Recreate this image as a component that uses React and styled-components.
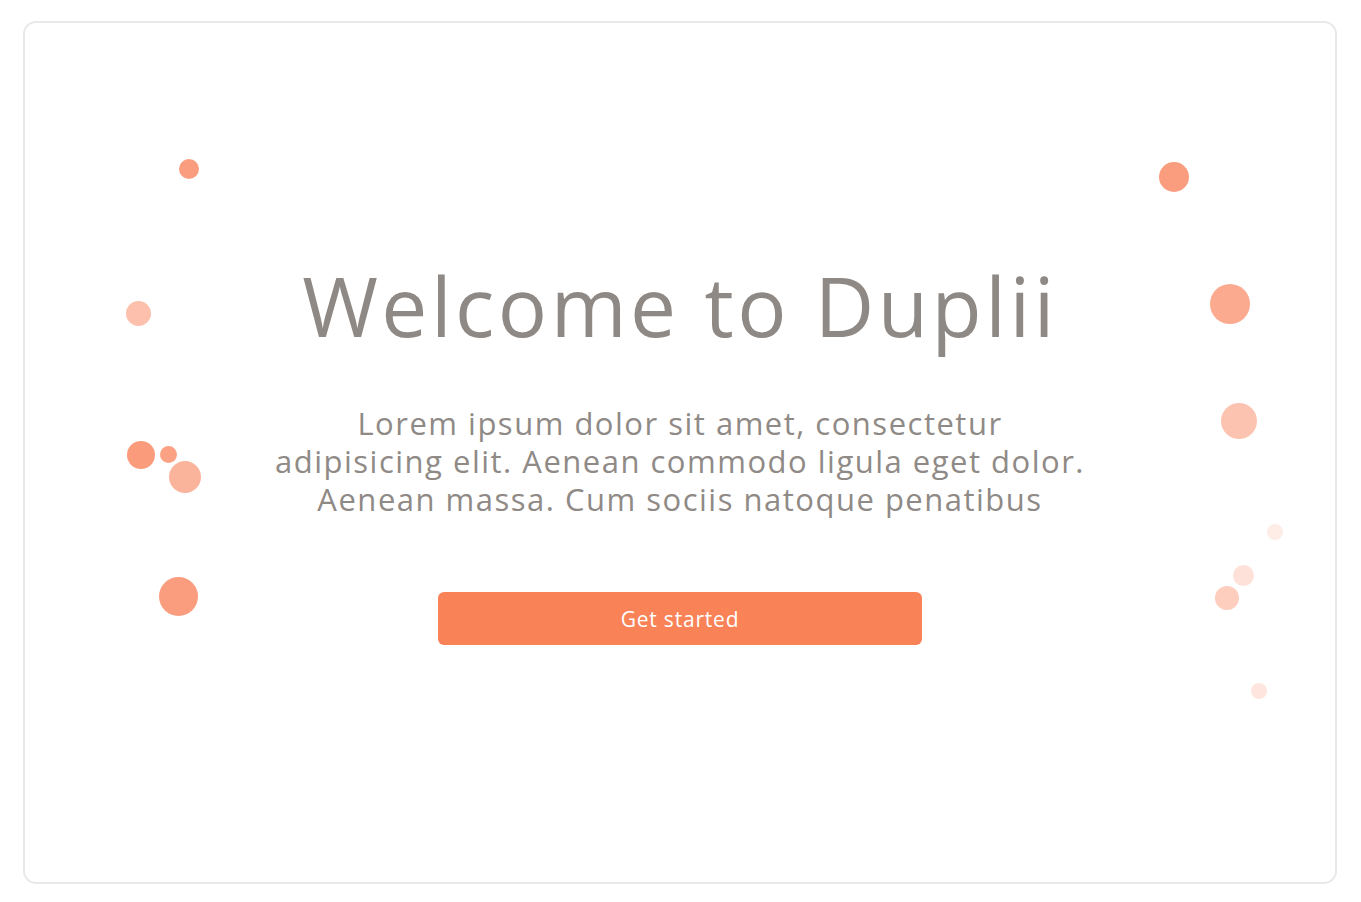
import React from 'react'
import styled, { createGlobalStyle } from 'styled-components'

const GlobalStyle = createGlobalStyle`
  html, body {
    margin: 0;
    padding: 0;
    background: #fff;
  }
  body {
    font-family: "Open Sans", Lato, sans-serif;
  }
`

// bubbles in page coordinates, card inner origin = (25, 23)
const bubbles = [
  { x: 189, y: 169, d: 20, a: 0.78 },
  { x: 138, y: 313, d: 25, a: 0.5 },
  { x: 141, y: 455, d: 28, a: 0.8 },
  { x: 168.5, y: 454, d: 17, a: 0.74 },
  { x: 185, y: 477, d: 32, a: 0.6 },
  { x: 178.5, y: 596, d: 39, a: 0.78 },
  { x: 1173.5, y: 177, d: 30, a: 0.78 },
  { x: 1230, y: 304, d: 40, a: 0.68 },
  { x: 1239, y: 421, d: 36, a: 0.48 },
  { x: 1275, y: 532, d: 16, a: 0.15 },
  { x: 1243, y: 575, d: 21, a: 0.24 },
  { x: 1227, y: 598, d: 24, a: 0.4 },
  { x: 1259, y: 691, d: 16, a: 0.2 },
]

const App = () => {
  return (
    <>
      <GlobalStyle />
      <Page>
        <Card>
          {bubbles.map((b, i) => (
            <Bubble
              key={i}
              style={{
                left: b.x - 25 - b.d / 2,
                top: b.y - 23 - b.d / 2,
                width: b.d,
                height: b.d,
                opacity: b.a,
              }}
            />
          ))}
          <Content>
            <Title>Welcome to Duplii</Title>
            <Lead>
              Lorem ipsum dolor sit amet, consectetur
              <br />
              adipisicing elit. Aenean commodo ligula eget dolor.
              <br />
              Aenean massa. Cum sociis natoque penatibus
            </Lead>
            <Button>Get started</Button>
          </Content>
        </Card>
      </Page>
    </>
  )
}

export default App

const Button = styled.button`
  width: 484px;
  height: 53px;
  border: none;
  border-radius: 6px;
  background: #f98257;
  color: #fff;
  font-family: "Open Sans", sans-serif;
  font-size: 21px;
  font-weight: 400;
  letter-spacing: 0.8px;
  cursor: pointer;
  margin-top: 74px;
`

const Lead = styled.p`
  margin: 0;
  margin-top: 49px;
  font-size: 31px;
  line-height: 38px;
  font-weight: 400;
  letter-spacing: 1.5px;
  color: #8f8a86;
  text-align: center;
`

const Title = styled.h1`
  margin: 0;
  font-size: 82px;
  line-height: 100px;
  font-weight: 400;
  color: #8e8985;
  letter-spacing: 3.5px;
`

const Content = styled.div`
  display: flex;
  flex-direction: column;
  align-items: center;
  padding-top: 232px;
  position: relative;
`

const Bubble = styled.div`
  position: absolute;
  border-radius: 50%;
  background: #f9825a;
`

const Card = styled.div`
  position: relative;
  box-sizing: border-box;
  width: 1314px;
  height: 863px;
  border: 2px solid #e9e9e9;
  border-radius: 13px;
  background: #fff;
`

const Page = styled.div`
  padding: 21px 0 0 23px;
  height: 902px;
  box-sizing: border-box;
`
